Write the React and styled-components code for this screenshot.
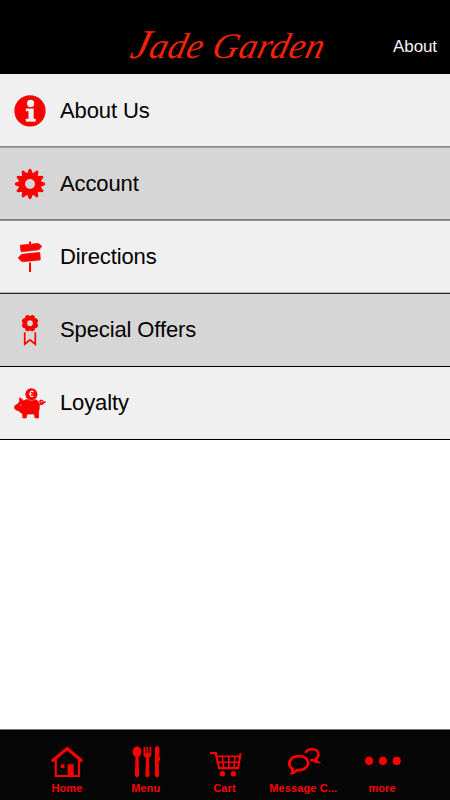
import React from "react";
import styled, { createGlobalStyle } from "styled-components";

const RED = "#fb0000";

const InfoIcon = () => (
  <svg viewBox="0 0 32 32">
    <circle cx="16" cy="15.9" r="15.6" fill={RED} />
    <circle cx="16.6" cy="8.4" r="3.6" fill="#f0f0f0" />
    <path
      d="M12 13.7h7.5v10.2h2v2.5H12v-2.5h2.7v-7.8H12z"
      fill="#f0f0f0"
      stroke="#f0f0f0"
      strokeWidth="0.4"
    />
  </svg>
);

const GearIcon = () => (
  <svg viewBox="0 0 32 32">
    <circle cx="16" cy="16" r="8" fill="none" stroke={RED} strokeWidth="6" />
    {Array.from({ length: 12 }, (_, i) => (
      <path
        key={i}
        d="M12.8 6.2L14.8 1.4Q16 0 17.2 1.4L19.2 6.2z"
        fill={RED}
        transform={`rotate(${i * 30} 16 16)`}
      />
    ))}
  </svg>
);

const SignIcon = () => (
  <svg viewBox="0 0 32 32" fill={RED}>
    <path d="M15 0.5h2v2.6h-2zM15 21.4h2V31h-2z" />
    <g stroke={RED} strokeWidth="0.7" strokeLinejoin="round">
      <path d="M6.2 4.2L24.2 2.4 27.8 5.2 25 8.7 7.1 10.8z" />
      <path d="M7.5 13.3L25.8 11.4 26.3 18.9 8.1 20.7 4.2 17.1z" />
    </g>
  </svg>
);

const RosetteIcon = () => (
  <svg viewBox="0 0 32 32" fill={RED}>
    <circle cx="16" cy="9.2" r="5" fill="none" stroke={RED} strokeWidth="4.2" />
    {Array.from({ length: 8 }, (_, i) => (
      <circle
        key={i}
        cx="16"
        cy="3.2"
        r="2.5"
        transform={`rotate(${i * 45 + 22.5} 16 9.2)`}
      />
    ))}
    <path
      d="M10.7 18.2V30.2L16 25.8 21.3 30.2V18.2"
      fill="none"
      stroke={RED}
      strokeWidth="1.7"
    />
  </svg>
);

const PigIcon = () => (
  <svg viewBox="0 0 32 32" fill={RED}>
    <circle cx="17.4" cy="7.2" r="6" />
    <path
      d="M19.7 5.2Q17.2 3 16.3 5.3V8.7Q17.3 10.7 19.7 8.9M14.7 7H18.5"
      fill="none"
      stroke="#f0f0f0"
      strokeWidth="1.1"
    />
    <path
      d="M5.4 10.8Q8.5 11.6 9.6 14Q12 12.2 13.6 12.6Q17.3 15.1 21.2 12.6Q25 13.5 25.4 18Q25.5 22 24.6 25V31H21.1L20.2 27.1H13.2L12.2 31H8.9L8.5 26.7Q6 25.6 5.1 24.1Q1.4 23 .6 21.5V18.8Q3.5 17.8 5.5 14.7z"
      stroke={RED}
      strokeWidth="0.6"
      strokeLinejoin="round"
    />
    <circle cx="6.8" cy="18" r="0.6" fill="#f0f0f0" />
    <path
      d="M24.5 16.8Q29.6 18.3 29.4 15Q27.6 12 25.8 14.3Q26.8 18 31.6 14.7"
      fill="none"
      stroke={RED}
      strokeWidth="1.4"
    />
  </svg>
);

const HomeIcon = () => (
  <svg viewBox="0 0 32 32">
    <g fill="none" stroke={RED}>
      <path d="M0.9 15.2L16.1 2.6 31.3 15.2" strokeWidth="3.1" />
      <path d="M4.7 12.5V30H28V12.5" strokeWidth="2.2" />
    </g>
    <path d="M9.7 18.2h3.9V22H9.7zM16.6 18.2h6.1V30h-6.1z" fill={RED} />
  </svg>
);

const CutleryIcon = () => (
  <svg viewBox="0 0 32 32" fill={RED}>
    <ellipse cx="7" cy="5.8" rx="4.4" ry="5.5" />
    <path d="M5.4 10h3.2L9.1 29.8Q7 32.8 4.9 29.8z" />
    <path d="M13.5 1h1.8v6.2h1.2V1h1.8v6.2h1.2V1h1.8v7.8Q21.1 11 19 11.8L19.5 29.8Q17.5 32.8 15.4 29.8L15.9 11.8Q13.5 11 13.5 8.8z" />
    <path d="M25 2Q25.5 0 27.3 0Q29.5 0 29.5 4V10L30.3 13.8 28.7 15.8 29.1 29.8Q27 32.8 24.9 29.8z" />
  </svg>
);

const CartIcon = () => (
  <svg viewBox="0 0 32 32" fill={RED}>
    <g fill="none" stroke={RED}>
      <path d="M1 7.2H6.8L10.1 22.2H29L31.6 7.3" strokeWidth="2.2" />
      <path
        d="M7.5 10.4H31M8.8 16.3H29.8M13.3 10.4L14.6 22M19.8 10.4V22M26.1 10.4L24.9 22"
        strokeWidth="1.6"
      />
    </g>
    <circle cx="13.4" cy="27.7" r="2.7" />
    <circle cx="24.4" cy="27.7" r="2.7" />
  </svg>
);

const ChatIcon = () => (
  <svg viewBox="0 0 32 32" fill="none" stroke={RED}>
    <path
      d="M4.4 22.8C-1.2 18.9 1.2 10.3 10.8 10.1C22 10 23.4 21.2 13.4 23.9Q11 24.4 8.9 24.1Q7 26.6 3.6 27.4Q5 25 4.4 22.8z"
      strokeWidth="2.8"
      strokeLinejoin="round"
    />
    <path
      d="M17.6 6.8C19.2 2.1 29.4 1.9 30.5 7.8Q30.8 10.8 28 12.8Q28.1 14.8 29.6 16Q26.9 15.8 25.5 14.1Q24 14.5 22.3 14"
      strokeWidth="2.5"
    />
  </svg>
);

const MoreIcon = () => (
  <svg viewBox="0 0 40 32" fill={RED}>
    <circle cx="6.1" cy="14.8" r="4.1" />
    <circle cx="19.9" cy="14.8" r="4.1" />
    <circle cx="33.7" cy="14.8" r="4.1" />
  </svg>
);

const links = [
  { label: "About Us", icon: <InfoIcon />, lines: ["#858585", "#a2a2a2"] },
  { label: "Account", icon: <GearIcon />, lines: ["#808080", "#8c8c8c"] },
  { label: "Directions", icon: <SignIcon />, lines: ["#b8b8b8", "#252525"] },
  { label: "Special Offers", icon: <RosetteIcon />, lines: ["#d6d6d6", "#000"] },
  { label: "Loyalty", icon: <PigIcon />, lines: ["#f0f0f0", "#000"] },
];

const tabs = [
  { label: "Home", icon: <HomeIcon /> },
  { label: "Menu", icon: <CutleryIcon /> },
  { label: "Cart", icon: <CartIcon /> },
  { label: "Message C...", icon: <ChatIcon /> },
  { label: "more", icon: <MoreIcon />, wide: true },
];

const App = () => {
  return (
    <Screen>
      <GlobalStyle />
      <Header>
        <span />
        <Logo>Jade Garden</Logo>
        <HeaderLink>About</HeaderLink>
      </Header>
      <List>
        {links.map((link, index) => (
          <Row key={link.label} $shaded={index % 2 === 1} $lines={link.lines}>
            <RowIcon>{link.icon}</RowIcon>
            <RowLabel>{link.label}</RowLabel>
          </Row>
        ))}
      </List>
      <TabBar>
        {tabs.map((tab) => (
          <Tab key={tab.label}>
            <TabIcon $wide={tab.wide}>{tab.icon}</TabIcon>
            <TabLabel>{tab.label}</TabLabel>
          </Tab>
        ))}
      </TabBar>
    </Screen>
  );
};

const GlobalStyle = createGlobalStyle`
  * {
    box-sizing: border-box;
  }
  body {
    margin: 0;
    background: white;
    font-family: "Liberation Sans", Arial, sans-serif;
  }
  svg {
    display: block;
    width: 100%;
    height: 100%;
    overflow: visible;
  }
`;

const Screen = styled.div`
  display: flex;
  flex-direction: column;
  width: 450px;
  height: 800px;
  overflow: hidden;
`;

const Header = styled.header`
  display: grid;
  grid-template-columns: 131px 197px 1fr;
  height: 74px;
  flex-shrink: 0;
  background: black;
`;

const Logo = styled.h1`
  margin: 0;
  padding: 22px 0 0 3px;
  color: #f42208;
  font-family: "Liberation Serif", "Times New Roman", serif;
  font-size: 36px;
  font-style: italic;
  font-weight: 400;
  line-height: 44px;
  letter-spacing: 0.5px;
  white-space: nowrap;
  transform: skewX(-14deg);

  &::first-letter {
    font-size: 41px;
  }
`;

const HeaderLink = styled.a`
  padding: 37px 13px 0 0;
  color: #f5f5f5;
  font-size: 17px;
  line-height: 20px;
  letter-spacing: -0.1px;
  text-align: right;
`;

const List = styled.ul`
  flex: 1;
  margin: 0;
  padding: 0;
  list-style: none;
`;

const Row = styled.li`
  display: flex;
  align-items: center;
  gap: 14px;
  height: 73px;
  padding: 0 14px;
  border-bottom: 1px solid ${({ $lines }) => $lines[1]};
  background: ${({ $shaded }) => ($shaded ? "#d6d6d6" : "#f0f0f0")};
  box-shadow: inset 0 -1px ${({ $lines }) => $lines[0]};

  &:first-child {
    height: 74px;
    padding-top: 1px;
  }
`;

const RowIcon = styled.div`
  width: 32px;
  height: 32px;
`;

const RowLabel = styled.span`
  color: black;
  font-size: 22px;
  line-height: 26px;
  letter-spacing: -0.12px;
`;

const TabBar = styled.nav`
  display: flex;
  height: 71px;
  padding: 0 28px;
  border-top: 1px solid #777;
  background: #050505;
`;

const Tab = styled.div`
  display: flex;
  flex: 1 1 0;
  flex-direction: column;
  align-items: center;
  padding-top: 16px;
`;

const TabIcon = styled.div`
  width: ${({ $wide }) => ($wide ? "40px" : "32px")};
  height: 32px;
`;

const TabLabel = styled.span`
  margin-top: 4px;
  margin-right: 1px;
  color: ${RED};
  font-size: 11px;
  font-weight: 700;
  line-height: 13px;
  letter-spacing: 0.1px;
  white-space: nowrap;
`;

export default App;
